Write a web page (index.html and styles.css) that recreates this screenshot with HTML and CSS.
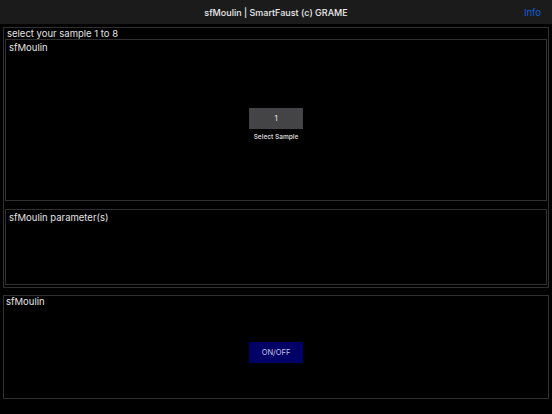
FILE: index.html
```html
<!DOCTYPE html>
<html>
<head>
<meta charset="utf-8">
<link rel="stylesheet" href="styles.css">
</head>
<body>
<header class="topbar">
  <div class="title">sfMoulin | SmartFaust (c) GRAME</div>
  <div class="info">Info</div>
</header>
<main class="main">
  <section class="group outer">
    <div class="label outer-label">select your sample 1 to 8</div>
    <div class="group inner first">
      <div class="label">sfMoulin</div>
      <div class="center">
        <div class="ctrl">
          <div class="btn grey">1</div>
          <div class="caption">Select Sample</div>
        </div>
      </div>
    </div>
    <div class="group inner second">
      <div class="label">sfMoulin parameter(s)</div>
    </div>
  </section>
  <section class="group bottom">
    <div class="label outer-label">sfMoulin</div>
    <div class="center">
      <div class="btn navy">ON/OFF</div>
    </div>
  </section>
</main>
</body>
</html>
```
FILE: styles.css
```css
html, body {
  margin: 0;
  padding: 0;
  background: #000;
  width: 552px;
  height: 414px;
  overflow: hidden;
  font-family: Inter, "Liberation Sans", sans-serif;
  color: #e4e4e4;
}
.topbar {
  height: 24px;
  background: #1b1b1c;
  display: flex;
  align-items: center;
  justify-content: center;
  position: relative;
}
.title {
  font-size: 9px;
  font-weight: 500;
  color: #ececec;
}
.info {
  position: absolute;
  right: 11px;
  top: 7px;
  font-size: 9.5px;
  color: #0d5fd6;
}
.main {
  padding: 3px 3px 0 3px;
  display: flex;
  flex-direction: column;
}
.group {
  border: 1px solid #303030;
  box-sizing: border-box;
  display: flex;
  flex-direction: column;
}
.outer {
  width: 546px;
  height: 261px;
  padding: 0 1px 2px 1px;
}
.label {
  font-size: 9.5px;
  line-height: 11px;
  height: 11px;
  padding-left: 2px;
  color: #e4e4e4;
}
.outer-label {
  padding-left: 2px;
}
.inner .label {
  padding-left: 3px;
  padding-top: 2px;
}
.inner {
  width: 542px;
}
.first {
  height: 162px;
}
.second {
  height: 76px;
  margin-top: 8px;
}
.center {
  flex: 1;
  display: flex;
  align-items: center;
  justify-content: center;
}
.ctrl {
  display: flex;
  flex-direction: column;
  align-items: center;
  padding-bottom: 4px;
}
.btn {
  width: 54px;
  height: 21px;
  display: flex;
  align-items: center;
  justify-content: center;
  font-size: 7.5px;
  color: #e8e8e8;
}
.grey {
  background: #444446;
}
.navy {
  background: #000066;
  color: #c8c8e0;
}
.caption {
  margin-top: 4px;
  font-size: 6.5px;
  font-weight: 600;
  color: #cfcfcf;
}
.bottom {
  width: 546px;
  height: 104px;
  margin-top: 7px;
}
.bottom .center {
  padding-bottom: 1px;
}
```
